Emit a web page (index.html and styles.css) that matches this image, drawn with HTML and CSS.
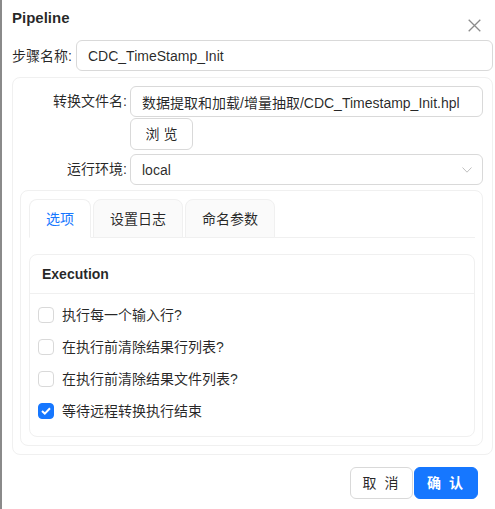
FILE: index.html
```html
<!DOCTYPE html>
<html lang="zh-CN">
<head>
    <meta charset="UTF-8">
    <meta name="viewport" content="width=device-width, initial-scale=1.0">
    <title>Pipeline</title>
    <link rel="stylesheet" href="styles.css">
</head>
<body>
    <div class="modal">
        <div class="modal-header">
            <span class="modal-title">Pipeline</span>
            <button class="modal-close" aria-label="close">
                <svg width="13" height="13" viewBox="0 0 13 13">
                    <path d="M0.7 0.7L12.3 12.3M12.3 0.7L0.7 12.3" stroke="#8c8c8c" stroke-width="1.3" fill="none"/>
                </svg>
            </button>
        </div>

        <div class="name-row">
            <label class="name-label">步骤名称:</label>
            <input class="text-input" type="text" value="CDC_TimeStamp_Init">
        </div>

        <div class="outer-box">
            <div class="form-row">
                <label class="form-label">转换文件名:</label>
                <div class="form-control">
                    <input class="text-input" type="text" value="数据提取和加载/增量抽取/CDC_Timestamp_Init.hpl">
                    <button class="btn browse-btn">浏 览</button>
                </div>
            </div>
            <div class="form-row env-row">
                <label class="form-label">运行环境:</label>
                <div class="form-control">
                    <div class="select">
                        <span>local</span>
                        <svg width="10" height="6" viewBox="0 0 10 6">
                            <path d="M0.5 0.5L5 5.2L9.5 0.5" stroke="#bfbfbf" stroke-width="1" fill="none"/>
                        </svg>
                    </div>
                </div>
            </div>

            <div class="inner-box">
                <div class="tabs">
                    <div class="tab active">选项</div>
                    <div class="tab">设置日志</div>
                    <div class="tab">命名参数</div>
                </div>

                <div class="card">
                    <div class="card-head">Execution</div>
                    <div class="card-body">
                        <label class="check-row"><span class="checkbox"></span>执行每一个输入行?</label>
                        <label class="check-row"><span class="checkbox"></span>在执行前清除结果行列表?</label>
                        <label class="check-row"><span class="checkbox"></span>在执行前清除结果文件列表?</label>
                        <label class="check-row"><span class="checkbox checked">
                            <svg width="10" height="8" viewBox="0 0 10 8">
                                <path d="M1 4L3.8 6.6L9 1.2" stroke="#fff" stroke-width="2" fill="none"/>
                            </svg>
                        </span>等待远程转换执行结束</label>
                    </div>
                </div>
            </div>
        </div>

        <div class="modal-footer">
            <button class="btn">取 消</button>
            <button class="btn primary">确 认</button>
        </div>
    </div>
</body>
</html>
```

FILE: styles.css
```css
body {
    margin: 0;
    background-color: #8a8a8a;
    font-family: "Liberation Sans", "Noto Sans CJK SC", sans-serif;
    font-size: 14px;
    line-height: 22px;
    color: rgba(0, 0, 0, 0.85);
}
.modal {
    position: relative;
    margin-left: 2px;
    height: 509px;
    padding: 0 2px 0 10px;
    background: #fff;
    box-sizing: border-box;
}
.modal-header {
    padding-top: 7px;
    height: 40px;
    box-sizing: border-box;
}
.modal-title {
    font-size: 15px;
    font-weight: 600;
    line-height: 22px;
}
.modal-close {
    position: absolute;
    top: 19px;
    right: 14px;
    width: 13px;
    height: 13px;
    padding: 0;
    border: none;
    background: none;
    display: flex;
}
.name-row {
    display: flex;
    align-items: center;
}
.name-label {
    width: 64px;
}
.text-input {
    flex: 1;
    height: 31px;
    box-sizing: border-box;
    border: 1px solid #d9d9d9;
    border-radius: 6px;
    padding: 0 11px;
    font: inherit;
    color: inherit;
    outline: none;
    min-width: 0;
}
.outer-box {
    margin-top: 6px;
    border: 1px solid #f0f0f0;
    border-radius: 8px;
    padding: 8px 9px 8px 7px;
}
.form-row {
    display: flex;
    align-items: flex-start;
}
.form-label {
    width: 107px;
    padding-right: 3px;
    text-align: right;
    line-height: 31px;
}
.form-control {
    flex: 1;
    display: flex;
    flex-direction: column;
    align-items: flex-start;
}
.form-control .text-input {
    width: 100%;
    flex: none;
}
.btn {
    height: 31px;
    box-sizing: border-box;
    padding: 0 15px;
    border: 1px solid #d9d9d9;
    border-radius: 6px;
    background: #fff;
    font: inherit;
    color: inherit;
    cursor: pointer;
    white-space: nowrap;
}
.browse-btn {
    margin-top: 1px;
    width: 63px;
    height: 32px;
    padding: 0;
}
.env-row {
    margin-top: 4px;
}
.select {
    width: 100%;
    height: 31px;
    box-sizing: border-box;
    border: 1px solid #d9d9d9;
    border-radius: 6px;
    padding: 0 10px 0 11px;
    display: flex;
    align-items: center;
    justify-content: space-between;
}
.inner-box {
    margin-top: 5px;
    border: 1px solid #f0f0f0;
    border-radius: 8px;
    padding: 8px 7px 8px 8px;
}
.tabs {
    display: flex;
    gap: 2px;
    border-bottom: 1px solid #f0f0f0;
}
.tab {
    height: 39px;
    box-sizing: border-box;
    padding: 0 16px;
    line-height: 38px;
    border: 1px solid #f0f0f0;
    border-radius: 8px 8px 0 0;
    background: #fafafa;
    margin-bottom: -1px;
}
.tab.active {
    background: #fff;
    border-bottom-color: #fff;
    color: #1677ff;
}
.card {
    margin-top: 16px;
    border: 1px solid #f0f0f0;
    border-radius: 8px;
}
.card-head {
    height: 38px;
    line-height: 38px;
    padding: 0 12px;
    font-weight: 600;
    border-bottom: 1px solid #f0f0f0;
}
.card-body {
    padding: 5px 8px 9px;
}
.check-row {
    display: flex;
    align-items: center;
    gap: 8px;
    height: 32px;
}
.checkbox {
    width: 16px;
    height: 16px;
    box-sizing: border-box;
    border: 1px solid #d9d9d9;
    border-radius: 4px;
    display: flex;
    align-items: center;
    justify-content: center;
}
.checkbox.checked {
    background: #1677ff;
    border-color: #1677ff;
}
.modal-footer {
    margin-top: 12px;
    display: flex;
    justify-content: flex-end;
    gap: 1px;
    padding-right: 15px;
}
.modal-footer .btn {
    width: 63px;
    height: 32px;
    padding: 0;
    letter-spacing: 2px;
}
.btn.primary {
    width: 64px;
    background: #1677ff;
    border-color: #1677ff;
    color: #fff;
    font-weight: 600;
}
```
